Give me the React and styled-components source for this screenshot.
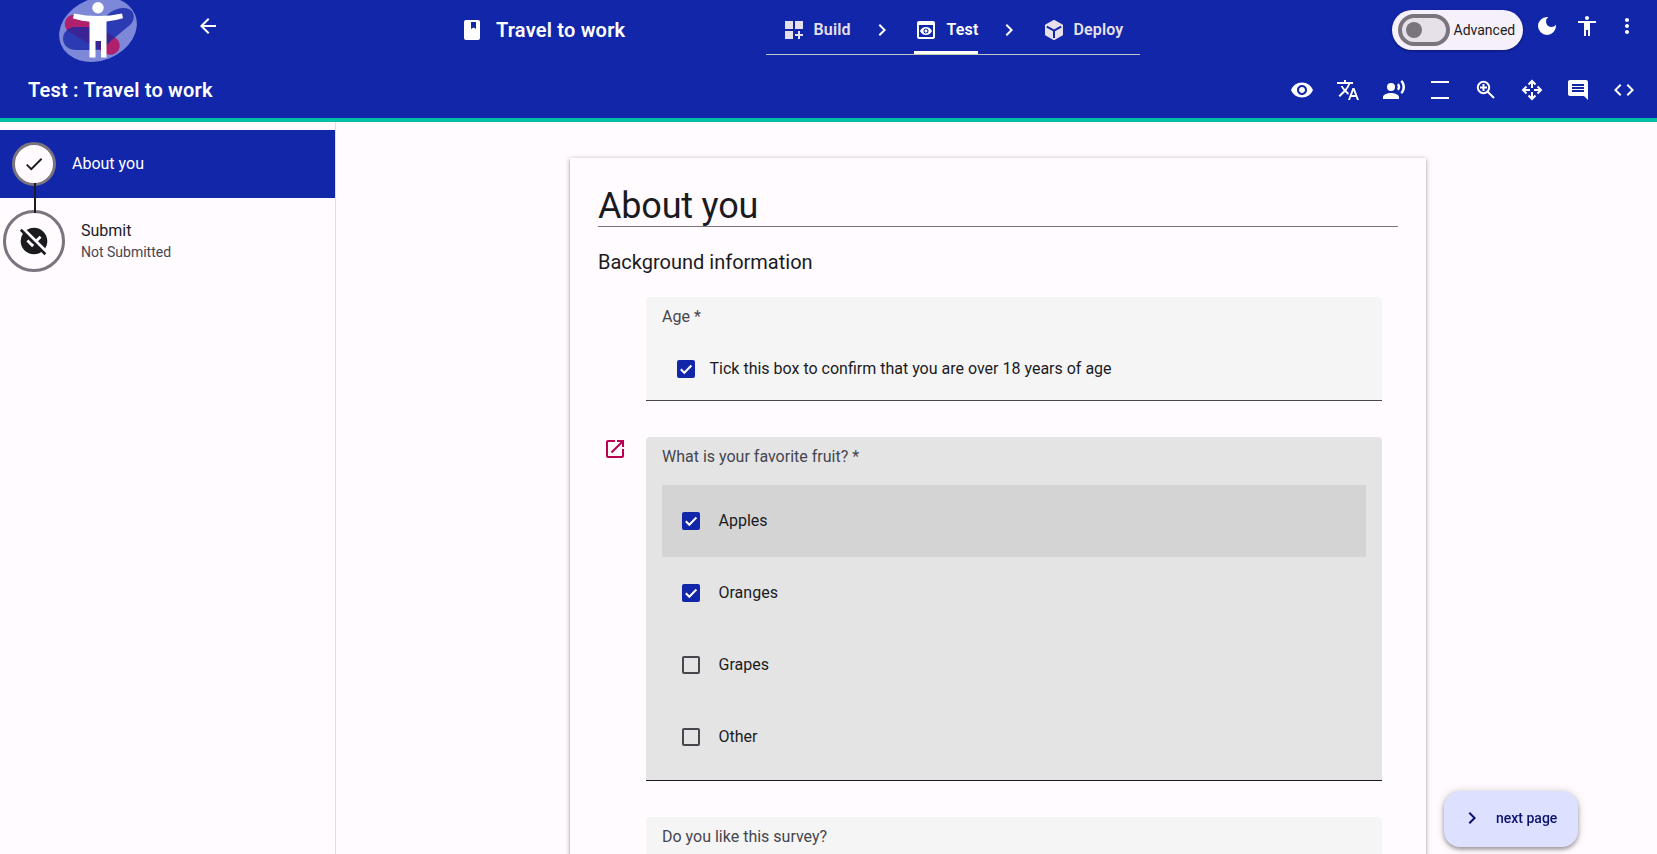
import React from "react";
import styled, { createGlobalStyle } from "styled-components";
import {
  MdArrowBack, MdDashboardCustomize, MdPreview, MdChevronRight, MdDarkMode,
  MdAccessibility, MdMoreVert, MdVisibility, MdTranslate, MdRecordVoiceOver,
  MdComment, MdCode, MdCheck, MdOpenInNew, MdUnpublished,
} from "react-icons/md";

const blue = "#1226aa";
const surface = "#fffbff";
const ink = "#1b1b1f";
const muted = "#46464f";
const outline = "#79747e";

const GlobalStyle = createGlobalStyle`
  *, *::before, *::after { box-sizing: border-box; }
  body {
    margin: 0;
    overflow: hidden;
    background: ${surface};
    color: ${ink};
    font: 400 16px/24px Roboto, sans-serif;
  }
  svg { display: block; flex: none; }
`;

const Page = styled.div`
  height: 100vh;
  display: flex;
  flex-direction: column;
  overflow: hidden;
`;

const Header = styled.header`
  flex: none;
  height: 122px;
  background: ${blue};
  border-bottom: 4px solid #00bfa5;
  color: #fff;
`;

const TopBar = styled.div`
  display: grid;
  grid-template-columns: 196px 268px 302px 374px 1fr;
  height: 62px;
`;

const LogoCell = styled.div`
  padding-left: 58px;
`;

const BackButton = styled.a`
  padding-top: 14px;
`;

const ProjectName = styled.div`
  display: flex;
  align-items: center;
  gap: 16px;
  height: 60px;
  font-size: 20px;
  font-weight: 600;
  letter-spacing: 0.2px;
`;

const Steps = styled.nav`
  display: flex;
  height: 55px;
  border-bottom: 1px solid #c3c9c0;
  padding: 0 16px 0 13px;
`;

const Step = styled.a`
  display: flex;
  align-items: center;
  gap: ${(p) => (p.$active ? 8.5 : 7.5)}px;
  height: 54px;
  width: ${(p) => p.$width}px;
  padding: 8px 0 0 ${(p) => (p.$active ? 0 : 3)}px;
  font-weight: 600;
  letter-spacing: 0.15px;
  color: ${(p) => (p.$active ? "#fff" : "#e6e0ec")};
  border-bottom: 3px solid ${(p) => (p.$active ? "#fff" : "transparent")};
  border-radius: 2px 2px 0 0;
`;

const Separator = styled.span`
  width: ${(p) => p.$width}px;
  padding: 18px 0 0 ${(p) => p.$inset}px;
`;

const UserTools = styled.div`
  display: flex;
  justify-content: flex-end;
  align-items: flex-start;
  gap: 16px;
  padding: 14px 18px 0 0;
`;

const AdvancedPill = styled.label`
  display: flex;
  align-items: center;
  gap: 3.5px;
  width: 131px;
  height: 40px;
  margin: -4px -4px 0 0;
  padding-left: 6px;
  border-radius: 20px;
  background: #f5f0f9;
  color: ${ink};
  font-size: 14px;
  line-height: 20px;
  box-shadow: 0 1px 3px rgba(0, 0, 0, 0.4);
`;

const Track = styled.span`
  display: flex;
  align-items: center;
  width: 52px;
  height: 32px;
  padding-left: 4px;
  border: 4px solid ${outline};
  border-radius: 16px;
  background: #e6e0e9;
`;

const Handle = styled.span`
  width: 16px;
  height: 16px;
  border-radius: 50%;
  background: ${outline};
`;

const SubBar = styled.div`
  display: flex;
  align-items: center;
  justify-content: space-between;
  height: 56px;
  padding: 0 21px 0 28px;
`;

const PageTitle = styled.h1`
  margin: 0;
  font-size: 20px;
  font-weight: 600;
  letter-spacing: 0.2px;
`;

const Tools = styled.div`
  display: flex;
  gap: 22px;
`;

const Body = styled.div`
  flex: 1;
  min-height: 0;
  display: flex;
`;

const Sidebar = styled.aside`
  width: 336px;
  padding-top: 8px;
  border-right: 1px solid #e0dce0;
`;

const SideItem = styled.div`
  display: flex;
  gap: 16px;
  align-items: center;
  padding: 12px 0 ${(p) => (p.$active ? "12px 12px" : "0 3px")};
  height: ${(p) => (p.$active ? 68 : 74)}px;
  background: ${(p) => (p.$active ? blue : "transparent")};
  color: ${(p) => (p.$active ? "#fff" : ink)};
`;

const StepCircle = styled.span`
  position: relative;
  flex: none;
  display: flex;
  align-items: center;
  justify-content: center;
  width: ${(p) => p.$size}px;
  height: ${(p) => p.$size}px;
  border: 3px solid ${outline};
  border-radius: 50%;
  background: ${surface};
  color: ${ink};
`;

const Connector = styled.span`
  position: absolute;
  top: 38px;
  left: 19px;
  width: 2px;
  height: 30px;
  background: ${ink};
  z-index: 1;
`;

const SideText = styled.div`
  display: flex;
  flex-direction: column;
`;

const SideName = styled.span`
  line-height: 22px;
`;

const SideNote = styled.span`
  font-size: 14px;
  line-height: 20px;
  color: ${muted};
`;

const Main = styled.main`
  flex: 1;
  padding: 36px 0 0 234px;
`;

const Sheet = styled.section`
  width: 856px;
  height: 760px;
  padding: 28px;
  background: ${surface};
  box-shadow: 0 3px 1px -2px rgba(0, 0, 0, 0.2), 0 2px 2px 0 rgba(0, 0, 0, 0.14), 0 1px 5px 0 rgba(0, 0, 0, 0.32);
`;

const Heading = styled.h2`
  margin: 0;
  height: 41px;
  border-bottom: 1px solid ${outline};
  font-size: 36px;
  line-height: 41px;
  font-weight: 400;
  letter-spacing: -0.2px;
`;

const SubHeading = styled.h3`
  margin: 21px 0 21px;
  font-size: 20px;
  line-height: 28px;
  font-weight: 400;
`;

const Question = styled.div`
  display: grid;
  grid-template-columns: 48px 736px;
  margin-bottom: 36px;
`;

const Marker = styled.span`
  padding-left: 5px;
  color: #ba0050;
`;

const Field = styled.fieldset`
  margin: 0;
  min-width: 0;
  height: ${(p) => p.$height}px;
  padding: 8px 16px 0;
  border: 0;
  border-bottom: 1px solid ${(p) => (p.$focused ? ink : muted)};
  border-radius: 4px 4px 0 0;
  background: ${(p) => (p.$focused ? "#e4e4e4" : "#f5f5f5")};
`;

const FieldLabel = styled.div`
  height: 24px;
  color: ${muted};
`;

const Confirm = styled.label`
  display: flex;
  align-items: center;
  gap: 14.5px;
  padding: 28px 0 0 15px;
`;

const Options = styled.div`
  margin-top: 16px;
`;

const Option = styled.label`
  display: flex;
  align-items: center;
  gap: 18.5px;
  height: 72px;
  padding-left: 20px;
  background: ${(p) => (p.$hover ? "#d4d4d4" : "transparent")};
`;

const Box = styled.span`
  flex: none;
  width: 18px;
  height: 18px;
  border: 2px solid ${(p) => (p.$checked ? blue : muted)};
  border-radius: 2px;
  background: ${(p) => (p.$checked ? blue : "transparent")};
`;

const NextButton = styled.button`
  position: fixed;
  right: 79px;
  bottom: 7px;
  display: flex;
  align-items: center;
  gap: 12px;
  width: 134px;
  height: 56px;
  padding: 0 0 2px 16px;
  border: 0;
  border-radius: 16px;
  background: #dee0ff;
  color: #0a1270;
  font: 500 14px/20px Roboto, sans-serif;
  box-shadow: 0 3px 5px -1px rgba(0, 0, 0, 0.2), 0 1px 8px rgba(0, 0, 0, 0.22), 0 2px 4px rgba(0, 0, 0, 0.16);
`;

const Logo = () => (
  <svg width="80" height="62" viewBox="58 0 80 62">
    <defs>
      <clipPath id="ribbon">
        <path d="M124 8C113 8 107 15 101 21L94 27H75C59 28 59 49 75 50H97C104 49 108 43 113 39L130 25C137 18 134 8 124 8Z" />
      </clipPath>
    </defs>
    <ellipse cx="98" cy="29.500" rx="40" ry="31" transform="rotate(-22 98 29.5)" fill="#7e88d8" />
    <path d="M74 24 L110.500 45.500" stroke="#b0206c" strokeWidth="18.500" strokeLinecap="round" />
    <g clipPath="url(#ribbon)">
      <path d="M58 0H138V62H58Z" fill="#2c3bb4" />
      <path d="M74 24 L110.500 45.500" stroke="#3b2494" strokeWidth="18.500" strokeLinecap="round" />
    </g>
    <circle cx="98" cy="7.700" r="5.700" fill="#fff" />
    <path d="M74 13.500 Q98 18.500 122 13.500 L123 18.300 Q114 21 106.500 21.500 V57.500 H101 V41 H95.500 V57.500 H89.500 V21.500 Q81 21 73 18.500Z" fill="#fff" />
  </svg>
);

const BookIcon = () => (
  <svg width="16" height="20" viewBox="0 0 16 20" fill="currentColor">
    <path d="M2 0H14A2 2 0 0 1 16 2V18A2 2 0 0 1 14 20H2A2 2 0 0 1 0 18V2A2 2 0 0 1 2 0ZM7 2V9L9.500 7.500L12 9V2Z" fillRule="evenodd" />
  </svg>
);

const CubeIcon = () => (
  <svg width="24" height="24" viewBox="0 0 24 24" fill="none">
    <path d="M12 3 20 7.400V16.600L12 21 4 16.600V7.400Z" fill="currentColor" stroke="currentColor" strokeWidth="2" strokeLinejoin="round" />
    <path d="M4.800 8.600 12 12.700 19.200 8.600M12 12.700V20" stroke={blue} strokeWidth="2" />
  </svg>
);

const LinesIcon = () => (
  <svg width="24" height="24" viewBox="0 0 24 24" fill="currentColor">
    <path d="M3 3H21V5H3ZM3 19H21V21H3Z" />
  </svg>
);

const ZoomInIcon = () => (
  <svg width="24" height="24" viewBox="0 0 24 24" fill="none" stroke="currentColor" strokeWidth="2">
    <circle cx="9.500" cy="9.500" r="5.700" />
    <path d="M13.700 13.700 20 20M9.500 6V13M6 9.500H13" />
  </svg>
);

const MoveIcon = () => (
  <svg width="24" height="24" viewBox="0 0 24 24" fill="none" stroke="currentColor" strokeWidth="2">
    <path d="M8.500 6.500 12 3 15.500 6.500M8.500 17.500 12 21 15.500 17.500M6.500 8.500 3 12 6.500 15.500M17.500 8.500 21 12 17.500 15.500" />
    <path d="M12 3V10M12 14V21M3 12H10M14 12H21" />
  </svg>
);

const Checkbox = ({ checked }) => (
  <Box $checked={checked}>
    {checked && (
      <svg width="14" height="14" viewBox="0 0 14 14" fill="none" stroke="#fff" strokeWidth="2">
        <path d="M1.800 7.300 5.300 10.800 12.400 3.500" />
      </svg>
    )}
  </Box>
);

const options = [
  { name: "Apples", checked: true, hover: true },
  { name: "Oranges", checked: true },
  { name: "Grapes" },
  { name: "Other" },
];

const tools = [MdVisibility, MdTranslate, MdRecordVoiceOver, LinesIcon, ZoomInIcon, MoveIcon, MdComment, MdCode];

export default function App() {
  return (
    <Page>
      <GlobalStyle />
      <Header>
        <TopBar>
          <LogoCell><Logo /></LogoCell>
          <BackButton><MdArrowBack size={24} /></BackButton>
          <ProjectName><BookIcon />Travel to work</ProjectName>
          <Steps>
            <Step $width={74}><MdDashboardCustomize size={24} />Build</Step>
            <Separator $width={61} $inset={17}><MdChevronRight size={24} /></Separator>
            <Step $width={64} $active><MdPreview size={24} />Test</Step>
            <Separator $width={61} $inset={19}><MdChevronRight size={24} /></Separator>
            <Step $width={85}><CubeIcon />Deploy</Step>
          </Steps>
          <UserTools>
            <AdvancedPill><Track><Handle /></Track>Advanced</AdvancedPill>
            <MdDarkMode size={24} />
            <MdAccessibility size={24} />
            <MdMoreVert size={24} />
          </UserTools>
        </TopBar>
        <SubBar>
          <PageTitle>Test : Travel to work</PageTitle>
          <Tools>{tools.map((Icon, i) => <Icon key={i} size={24} />)}</Tools>
        </SubBar>
      </Header>
      <Body>
        <Sidebar>
          <SideItem $active>
            <StepCircle $size={44}><MdCheck size={22} /><Connector /></StepCircle>
            <SideName>About you</SideName>
          </SideItem>
          <SideItem>
            <StepCircle $size={62}><MdUnpublished size={32} /></StepCircle>
            <SideText>
              <SideName>Submit</SideName>
              <SideNote>Not Submitted</SideNote>
            </SideText>
          </SideItem>
        </Sidebar>
        <Main>
          <Sheet>
            <Heading>About you</Heading>
            <SubHeading>Background information</SubHeading>
            <Question>
              <Marker />
              <Field $height={104}>
                <FieldLabel>Age *</FieldLabel>
                <Confirm><Checkbox checked />Tick this box to confirm that you are over 18 years of age</Confirm>
              </Field>
            </Question>
            <Question>
              <Marker><MdOpenInNew size={24} /></Marker>
              <Field $height={344} $focused>
                <FieldLabel>What is your favorite fruit? *</FieldLabel>
                <Options>
                  {options.map((o) => (
                    <Option key={o.name} $hover={o.hover}><Checkbox checked={o.checked} />{o.name}</Option>
                  ))}
                </Options>
              </Field>
            </Question>
            <Question>
              <Marker />
              <Field $height={104}>
                <FieldLabel>Do you like this survey?</FieldLabel>
              </Field>
            </Question>
          </Sheet>
        </Main>
      </Body>
      <NextButton><MdChevronRight size={24} />next page</NextButton>
    </Page>
  );
}
